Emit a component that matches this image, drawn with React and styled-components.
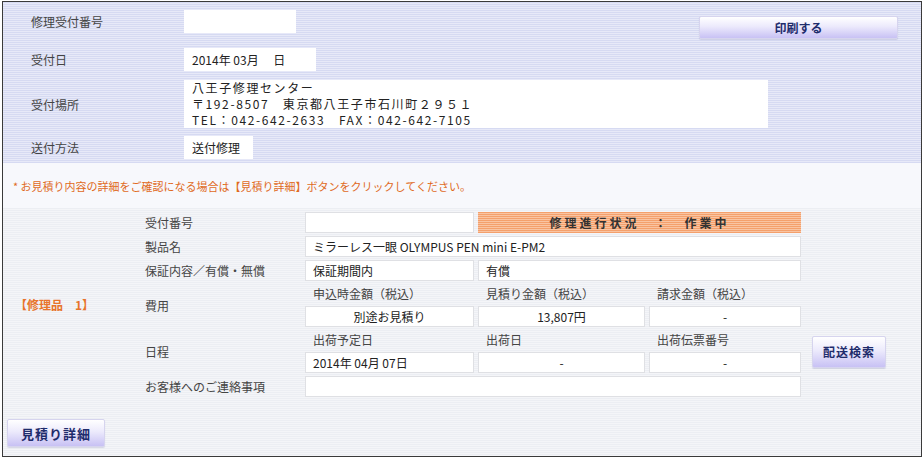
import styled, { createGlobalStyle } from "styled-components";

const GlobalStyle = createGlobalStyle`
  body {
    margin: 0;
    background: #fff;
    font-family: "Noto Sans CJK JP", "Noto Sans", sans-serif;
    font-size: 12px;
    color: #333;
  }
`;

const Frame = styled.div`
  margin: 1px 0 0 2px;
  width: 918px;
  height: 454px;
  border: 1px solid #3a3a3a;
  display: flex;
  flex-direction: column;
  overflow: hidden;
`;

const TopSection = styled.div`
  background: repeating-linear-gradient(
    to bottom,
    #d6daf2 0px,
    #d6daf2 1px,
    #e7e9f8 1px,
    #e7e9f8 2px
  );
  display: flex;
  flex-direction: column;
`;

const TopRow = styled.div`
  display: flex;
  align-items: center;
  height: ${props => props.h}px;
  padding-left: 28px;
`;

const TopLabel = styled.div`
  width: 153px;
  color: #444;
  font-size: 12px;
`;

const TopBox = styled.div`
  background: #fff;
  width: ${props => props.w}px;
  height: ${props => props.bh || 23}px;
  padding: 0 8px;
  box-sizing: border-box;
  display: flex;
  flex-direction: column;
  justify-content: center;
  font-size: 12px;
  color: #222;
  line-height: 15px;
`;

const AddressLine = styled.div`
  letter-spacing: 1.6px;
  font-size: 12px;
  line-height: 16px;
  white-space: pre;
`;

const Spacer = styled.div`
  flex: 1;
`;

const LavButton = styled.button`
  width: ${props => props.w}px;
  height: ${props => props.h}px;
  margin: ${props => props.m || "0"};
  border: 1px solid #d6d4ee;
  border-radius: 2px;
  background: linear-gradient(to bottom, #ffffff 0%, #eceafc 45%, #c8c1f4 100%);
  color: #1f2c6c;
  font-family: "Noto Sans CJK JP", sans-serif;
  font-weight: bold;
  font-size: ${props => props.fs || 12}px;
  letter-spacing: ${props => props.ls || 0}px;
  padding: 0;
  box-shadow: 0 1px 1px rgba(120, 120, 170, 0.25);
  cursor: pointer;
`;

const NoteArea = styled.div`
  height: 45px;
  background: #f7f8fc;
  display: flex;
  align-items: center;
  padding-left: 10px;
  color: #e06a1c;
  font-size: 11px;
`;

const BottomSection = styled.div`
  flex: 1;
  background: repeating-linear-gradient(
    to bottom,
    #eceef3 0px,
    #eceef3 1px,
    #f4f5f8 1px,
    #f4f5f8 2px
  );
  padding: 4px 0 0 4px;
  display: flex;
  flex-direction: column;
`;

const ItemGrid = styled.div`
  display: grid;
  grid-template-columns: 134px 156px 169px 167px 152px auto;
  grid-template-rows: 21px 21px 21px 19px 21px 19px 21px 21px;
  gap: 3px 4px;
`;

const ItemTag = styled.div`
  grid-column: 1;
  grid-row: 1 / 9;
  align-self: center;
  padding-left: 8px;
  color: #e8742a;
  font-weight: bold;
  font-size: 12px;
  white-space: pre;
`;

const ItemLabel = styled.div`
  grid-column: 2;
  grid-row: ${props => props.row};
  align-self: center;
  color: #444;
  font-size: 12px;
`;

const Cell = styled.div`
  grid-column: ${props => props.col};
  grid-row: ${props => props.row};
  background: #fff;
  border: 1px solid #dfe0e4;
  box-sizing: border-box;
  display: flex;
  align-items: center;
  justify-content: ${props => (props.center ? "center" : "flex-start")};
  padding: 0 7px;
  font-size: 12px;
  color: #222;
`;

const StatusCell = styled.div`
  grid-column: 4 / 6;
  grid-row: 1;
  background: repeating-linear-gradient(
    to bottom,
    #f4a06c 0px,
    #f4a06c 1px,
    #f9c4a2 1px,
    #f9c4a2 2px
  );
  display: flex;
  align-items: center;
  justify-content: center;
  font-weight: bold;
  font-size: 12px;
  letter-spacing: 3px;
  color: #333;
  white-space: pre;
`;

const HeadCell = styled.div`
  grid-column: ${props => props.col};
  grid-row: ${props => props.row};
  align-self: center;
  padding-left: 8px;
  color: #444;
  font-size: 12px;
`;

const SideButtonWrap = styled.div`
  grid-column: 6;
  grid-row: 6 / 8;
  display: flex;
  align-items: center;
  padding-left: 7px;
`;

const Footer = styled.div`
  padding: 22px 0 0 0;
`;

const App = () => {
  return (
    <>
      <GlobalStyle />
      <Frame>
        <TopSection>
          <TopRow h={39}>
            <TopLabel>修理受付番号</TopLabel>
            <TopBox w={112} />
            <Spacer />
            <LavButton w={199} h={23} m="11px 23px 0 0">印刷する</LavButton>
          </TopRow>
          <TopRow h={36}>
            <TopLabel>受付日</TopLabel>
            <TopBox w={132}>2014年 03月　 日</TopBox>
          </TopRow>
          <TopRow h={54}>
            <TopLabel>受付場所</TopLabel>
            <TopBox w={584} bh={48}>
              <AddressLine>八王子修理センター</AddressLine>
              <AddressLine>〒192-8507　東京都八王子市石川町２９５１</AddressLine>
              <AddressLine>TEL：042-642-2633　FAX：042-642-7105</AddressLine>
            </TopBox>
          </TopRow>
          <TopRow h={32}>
            <TopLabel>送付方法</TopLabel>
            <TopBox w={69}>送付修理</TopBox>
          </TopRow>
        </TopSection>

        <NoteArea>
          * お見積り内容の詳細をご確認になる場合は【見積り詳細】ボタンをクリックしてください。
        </NoteArea>

        <BottomSection>
          <ItemGrid>
            <ItemTag>【修理品　1】</ItemTag>

            <ItemLabel row={1}>受付番号</ItemLabel>
            <Cell col={3} row={1} />
            <StatusCell>修理進行状況　：　作業中</StatusCell>

            <ItemLabel row={2}>製品名</ItemLabel>
            <Cell col="3 / 6" row={2}>ミラーレス一眼 OLYMPUS PEN mini E-PM2</Cell>

            <ItemLabel row={3}>保証内容／有償・無償</ItemLabel>
            <Cell col={3} row={3}>保証期間内</Cell>
            <Cell col="4 / 6" row={3}>有償</Cell>

            <ItemLabel row="4 / 6">費用</ItemLabel>
            <HeadCell col={3} row={4}>申込時金額（税込）</HeadCell>
            <HeadCell col={4} row={4}>見積り金額（税込）</HeadCell>
            <HeadCell col={5} row={4}>請求金額（税込）</HeadCell>
            <Cell col={3} row={5} center>別途お見積り</Cell>
            <Cell col={4} row={5} center>13,807円</Cell>
            <Cell col={5} row={5} center>-</Cell>

            <ItemLabel row="6 / 8">日程</ItemLabel>
            <HeadCell col={3} row={6}>出荷予定日</HeadCell>
            <HeadCell col={4} row={6}>出荷日</HeadCell>
            <HeadCell col={5} row={6}>出荷伝票番号</HeadCell>
            <Cell col={3} row={7}>2014年 04月 07日</Cell>
            <Cell col={4} row={7} center>-</Cell>
            <Cell col={5} row={7} center>-</Cell>
            <SideButtonWrap>
              <LavButton w={74} h={32} fs={12} ls={1}>配送検索</LavButton>
            </SideButtonWrap>

            <ItemLabel row={8}>お客様へのご連絡事項</ItemLabel>
            <Cell col="3 / 6" row={8} />
          </ItemGrid>
          <Footer>
            <LavButton w={98} h={28} fs={13} ls={1}>見積り詳細</LavButton>
          </Footer>
        </BottomSection>
      </Frame>
    </>
  );
};

export default App;
